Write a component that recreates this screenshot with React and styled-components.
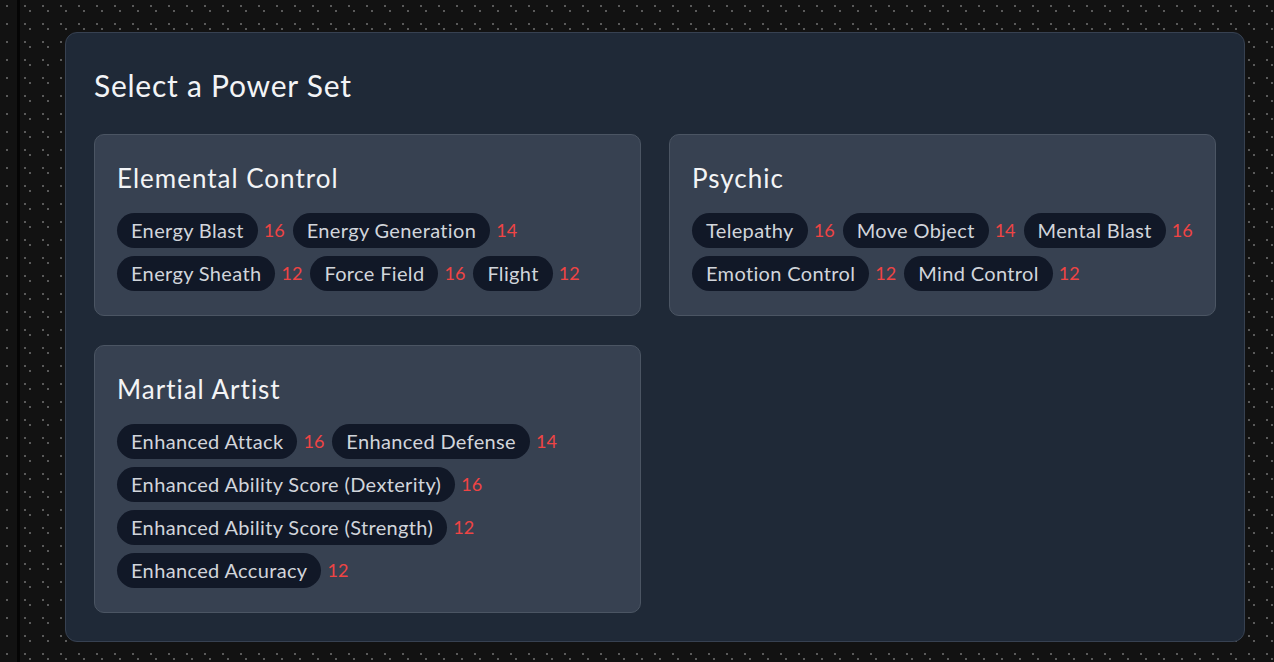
import React from "react";
import styled, { createGlobalStyle } from "styled-components";

const powerSets = [
  {
    name: "Elemental Control",
    powers: [
      { name: "Energy Blast", cost: 16 },
      { name: "Energy Generation", cost: 14 },
      { name: "Energy Sheath", cost: 12 },
      { name: "Force Field", cost: 16 },
      { name: "Flight", cost: 12 },
    ],
  },
  {
    name: "Psychic",
    powers: [
      { name: "Telepathy", cost: 16 },
      { name: "Move Object", cost: 14 },
      { name: "Mental Blast", cost: 16 },
      { name: "Emotion Control", cost: 12 },
      { name: "Mind Control", cost: 12 },
    ],
  },
  {
    name: "Martial Artist",
    powers: [
      { name: "Enhanced Attack", cost: 16 },
      { name: "Enhanced Defense", cost: 14 },
      { name: "Enhanced Ability Score (Dexterity)", cost: 16 },
      { name: "Enhanced Ability Score (Strength)", cost: 12 },
      { name: "Enhanced Accuracy", cost: 12 },
    ],
  },
];

const GlobalStyle = createGlobalStyle`
  html, body {
    margin: 0;
    padding: 0;
    height: 100%;
  }
  body {
    background-color: #121212;
    background-image:
      radial-gradient(circle at 1px 1px, #5a5a5a 0.9px, transparent 1px),
      radial-gradient(circle at 1px 1px, #5a5a5a 0.9px, transparent 1px);
    background-size: 18px 18px;
    background-position: 6px 5px, 11px 10px;
    font-family: "Lato", "Open Sans", sans-serif;
  }
  #root {
    min-height: 100%;
  }
`;

function App() {
  return (
    <>
      <GlobalStyle />
      <Page>
        <Rail />
        <Main>
          <Panel>
            <Heading>Select a Power Set</Heading>
            <SetGrid>
              {powerSets.map((set) => (
                <SetCard key={set.name}>
                  <SetTitle>{set.name}</SetTitle>
                  <PowerList>
                    {set.powers.map((power) => (
                      <Power key={power.name}>
                        <Chip>{power.name}</Chip>
                        <Cost>{power.cost}</Cost>
                      </Power>
                    ))}
                  </PowerList>
                </SetCard>
              ))}
            </SetGrid>
          </Panel>
        </Main>
      </Page>
    </>
  );
}

const Page = styled.div`
  display: flex;
  min-height: 662px;
`;

const Rail = styled.div`
  width: 17px;
  flex-shrink: 0;
  border-right: 3px solid #050505;
  background-color: #121212;
  background-image: radial-gradient(circle at 1px 1px, #5a5a5a 0.9px, transparent 1px);
  background-size: 18px 18px;
  background-position: 6px 5px;
`;

const Main = styled.main`
  flex: 1;
  padding: 32px 29px 20px 45px;
`;

const Panel = styled.section`
  background: #1f2937;
  border: 1px solid #374151;
  border-radius: 12px;
  padding: 34px 28px 28px;
`;

const Heading = styled.h2`
  margin: 0 0 31px;
  font-size: 30px;
  line-height: 36px;
  font-weight: 400;
  letter-spacing: 0.75px;
  color: #f3f4f6;
`;

const SetGrid = styled.div`
  display: grid;
  grid-template-columns: 1fr 1fr;
  gap: 29px 28px;
  align-items: start;
`;

const SetCard = styled.div`
  background: #374151;
  border: 1px solid #4b5563;
  border-radius: 10px;
  padding: 26px 22px 24px;
`;

const SetTitle = styled.h3`
  margin: 0 0 18px;
  font-size: 26px;
  line-height: 34px;
  font-weight: 400;
  letter-spacing: 1px;
  color: #f3f4f6;
`;

const PowerList = styled.div`
  display: flex;
  flex-wrap: wrap;
  gap: 8px 8px;
`;

const Power = styled.div`
  display: flex;
  align-items: center;
  gap: 6px;
`;

const Chip = styled.span`
  background: #111827;
  color: #d1d5db;
  border-radius: 999px;
  padding: 4px 14px;
  font-size: 20px;
  line-height: 27px;
  letter-spacing: 0.35px;
  white-space: nowrap;
`;

const Cost = styled.span`
  color: #ef4444;
  font-size: 18px;
  line-height: 27px;
`;

export default App;
